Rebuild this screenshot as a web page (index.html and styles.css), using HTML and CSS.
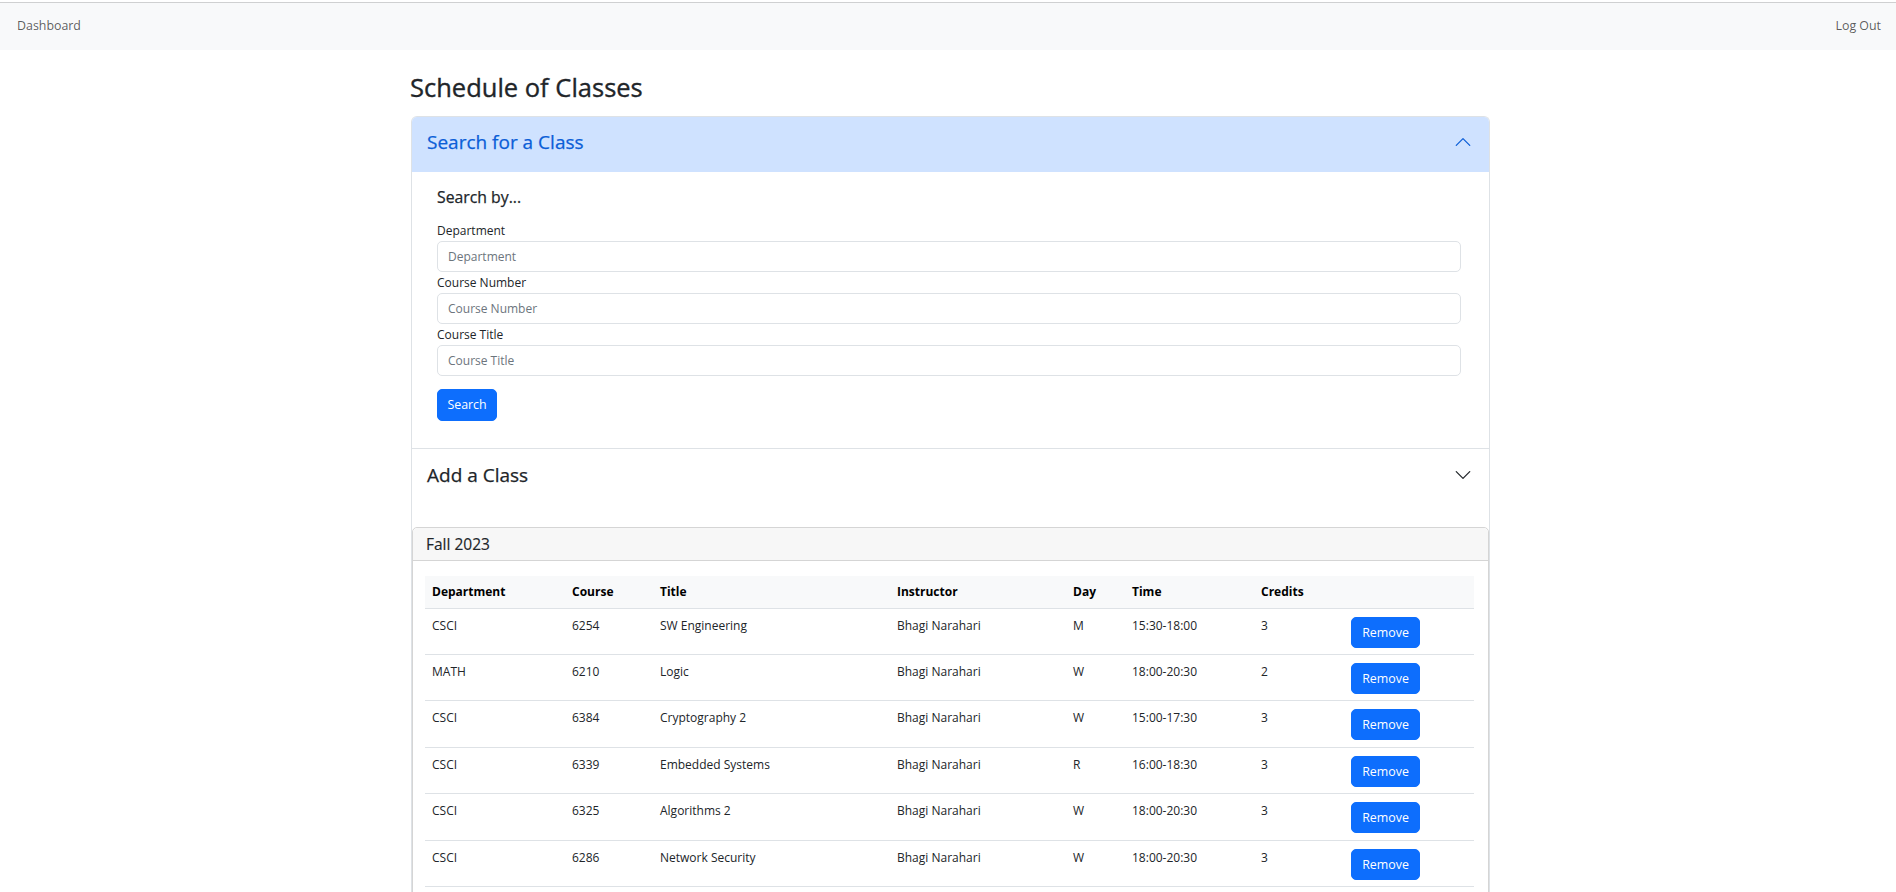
FILE: index.html
```html
<!DOCTYPE html>
<html lang="en">
<head>
<meta charset="utf-8">
<title>Schedule of Classes</title>
<link rel="stylesheet" href="styles.css">
</head>
<body>
<nav class="navbar">
  <a class="nav-link" href="#">Dashboard</a>
  <a class="nav-link" href="#">Log Out</a>
</nav>
<main class="container">
  <h2 class="page-title">Schedule of Classes</h2>
  <div class="accordion">
    <div class="acc-item">
      <div class="acc-header active">
        <span class="acc-title">Search for a Class</span>
        <svg class="chev" viewBox="0 0 16 16" width="18" height="18" fill="none" stroke="#0b5ed7" stroke-width="1.1" stroke-linecap="round" stroke-linejoin="round"><path d="M2 11L8 5L14 11"/></svg>
      </div>
      <div class="acc-body">
        <form class="search-form">
          <h5 class="search-title">Search by...</h5>
          <label class="field-label">Department</label>
          <input class="form-control" type="text" placeholder="Department">
          <label class="field-label">Course Number</label>
          <input class="form-control" type="text" placeholder="Course Number">
          <label class="field-label">Course Title</label>
          <input class="form-control" type="text" placeholder="Course Title">
          <button class="btn btn-search" type="button">Search</button>
        </form>
      </div>
    </div>
    <div class="acc-item">
      <div class="acc-header second">
        <span class="acc-title">Add a Class</span>
        <svg class="chev" viewBox="0 0 16 16" width="18" height="18" fill="none" stroke="#212529" stroke-width="1.1" stroke-linecap="round" stroke-linejoin="round"><path d="M2 5L8 11L14 5"/></svg>
      </div>
      <div class="schedule-card">
        <div class="card-header">Fall 2023</div>
        <div class="card-body">
          <table class="schedule">
            <colgroup>
              <col class="c-dept"><col class="c-course"><col class="c-title"><col class="c-instr"><col class="c-day"><col class="c-time"><col class="c-cred"><col class="c-act">
            </colgroup>
            <thead>
              <tr><th>Department</th><th>Course</th><th>Title</th><th>Instructor</th><th>Day</th><th>Time</th><th>Credits</th><th></th></tr>
            </thead>
            <tbody>
              <tr><td>CSCI</td><td>6254</td><td>SW Engineering</td><td>Bhagi Narahari</td><td>M</td><td>15:30-18:00</td><td>3</td><td><button class="btn btn-remove" type="button">Remove</button></td></tr>
              <tr><td>MATH</td><td>6210</td><td>Logic</td><td>Bhagi Narahari</td><td>W</td><td>18:00-20:30</td><td>2</td><td><button class="btn btn-remove" type="button">Remove</button></td></tr>
              <tr><td>CSCI</td><td>6384</td><td>Cryptography 2</td><td>Bhagi Narahari</td><td>W</td><td>15:00-17:30</td><td>3</td><td><button class="btn btn-remove" type="button">Remove</button></td></tr>
              <tr><td>CSCI</td><td>6339</td><td>Embedded Systems</td><td>Bhagi Narahari</td><td>R</td><td>16:00-18:30</td><td>3</td><td><button class="btn btn-remove" type="button">Remove</button></td></tr>
              <tr><td>CSCI</td><td>6325</td><td>Algorithms 2</td><td>Bhagi Narahari</td><td>W</td><td>18:00-20:30</td><td>3</td><td><button class="btn btn-remove" type="button">Remove</button></td></tr>
              <tr><td>CSCI</td><td>6286</td><td>Network Security</td><td>Bhagi Narahari</td><td>W</td><td>18:00-20:30</td><td>3</td><td><button class="btn btn-remove" type="button">Remove</button></td></tr>
            </tbody>
          </table>
        </div>
      </div>
    </div>
  </div>
</main>
</body>
</html>
```
FILE: styles.css
```css
* { box-sizing: border-box; }

body {
  margin: 0;
  font-family: "Open Sans", "Noto Sans", sans-serif;
  font-size: 12px;
  line-height: 1.5;
  color: #212529;
  background: #fff;
}

.navbar {
  margin-top: 2px;
  border-top: 1px solid #cfd0d1;
  background: #f8f9fa;
  height: 48px;
  display: flex;
  justify-content: space-between;
  align-items: center;
  padding: 0 15px 0 17px;
}

.nav-link {
  color: rgba(0, 0, 0, 0.65);
  text-decoration: none;
  font-size: 12.4px;
}

.container {
  width: 1079px;
  margin-left: 411px;
}

.page-title {
  margin: 22px 0 13px -1px;
  font-size: 25.5px;
  font-weight: 500;
  line-height: 1.2;
  color: #212529;
  -webkit-text-stroke: 0.35px currentColor;
}

.accordion {
  border: 1px solid #dee2e6;
  border-bottom: none;
  border-radius: 6px 6px 0 0;
}

.acc-header {
  display: flex;
  justify-content: space-between;
  align-items: center;
  height: 55px;
  padding: 11px 17px 16px 15px;
  font-size: 19px;
  line-height: 28px;
  color: #212529;
}

.acc-title { -webkit-text-stroke: 0.25px currentColor; }

.acc-header.second { padding-top: 12px; padding-bottom: 15px; }

.acc-header.active {
  background: #cfe2ff;
  color: #0b5ed7;
  border-radius: 5px 5px 0 0;
}

.chev { display: block; flex: none; }

.acc-item + .acc-item { border-top: 1px solid #dee2e6; }

.acc-body {
  padding: 16px 28px 27px 25px;
}

.search-title {
  margin: 0 0 13px;
  font-size: 15.8px;
  font-weight: 500;
  line-height: 19px;
  -webkit-text-stroke: 0.25px currentColor;
}

.field-label {
  display: block;
  font-size: 12px;
  line-height: 21px;
}

.form-control {
  display: block;
  width: 100%;
  height: 31px;
  margin: 0;
  padding: 0 10px;
  border: 1px solid #dee2e6;
  border-radius: 5px;
  font-family: inherit;
  font-size: 12px;
  color: #212529;
  background: #fff;
}

.form-control::placeholder { color: #6c757d; }

.btn {
  display: inline-block;
  background: #0d6efd;
  color: #fff;
  border: 1px solid #0d6efd;
  border-radius: 5px;
  font-family: inherit;
  font-size: 12.4px;
  line-height: 19px;
  padding: 0 10px;
  cursor: pointer;
}

.btn-search {
  margin-top: 13px;
  height: 32px;
  width: 60px;
  padding: 0;
}

.btn-remove {
  height: 31px;
  width: 69px;
  padding: 0;
}

.schedule-card {
  margin-top: 23px;
  border: 1px solid #d5d5d5;
  border-radius: 5px;
}

.card-header {
  background: #f7f7f7;
  border-bottom: 1px solid #d5d5d5;
  border-radius: 5px 5px 0 0;
  padding: 7px 14px 6px 13px;
  font-size: 15.5px;
  line-height: 19px;
  -webkit-text-stroke: 0.15px currentColor;
}

.card-body {
  padding: 15px 14px 16px 12px;
}

.schedule {
  width: 100%;
  border-collapse: collapse;
  table-layout: fixed;
}

.c-dept { width: 140px; }
.c-course { width: 88px; }
.c-title { width: 237px; }
.c-instr { width: 176px; }
.c-day { width: 59px; }
.c-time { width: 129px; }
.c-cred { width: 90px; }
.c-act { width: 130px; }

.schedule th {
  background: #f8f9fa;
  color: #000;
  font-weight: 700;
  text-align: left;
  padding: 7px;
  line-height: 18px;
  border-bottom: 1px solid #dee2e6;
}

.schedule td {
  padding: 8px 7px 6.4px;
  line-height: 18px;
  vertical-align: top;
  border-bottom: 1px solid #dee2e6;
}
```
